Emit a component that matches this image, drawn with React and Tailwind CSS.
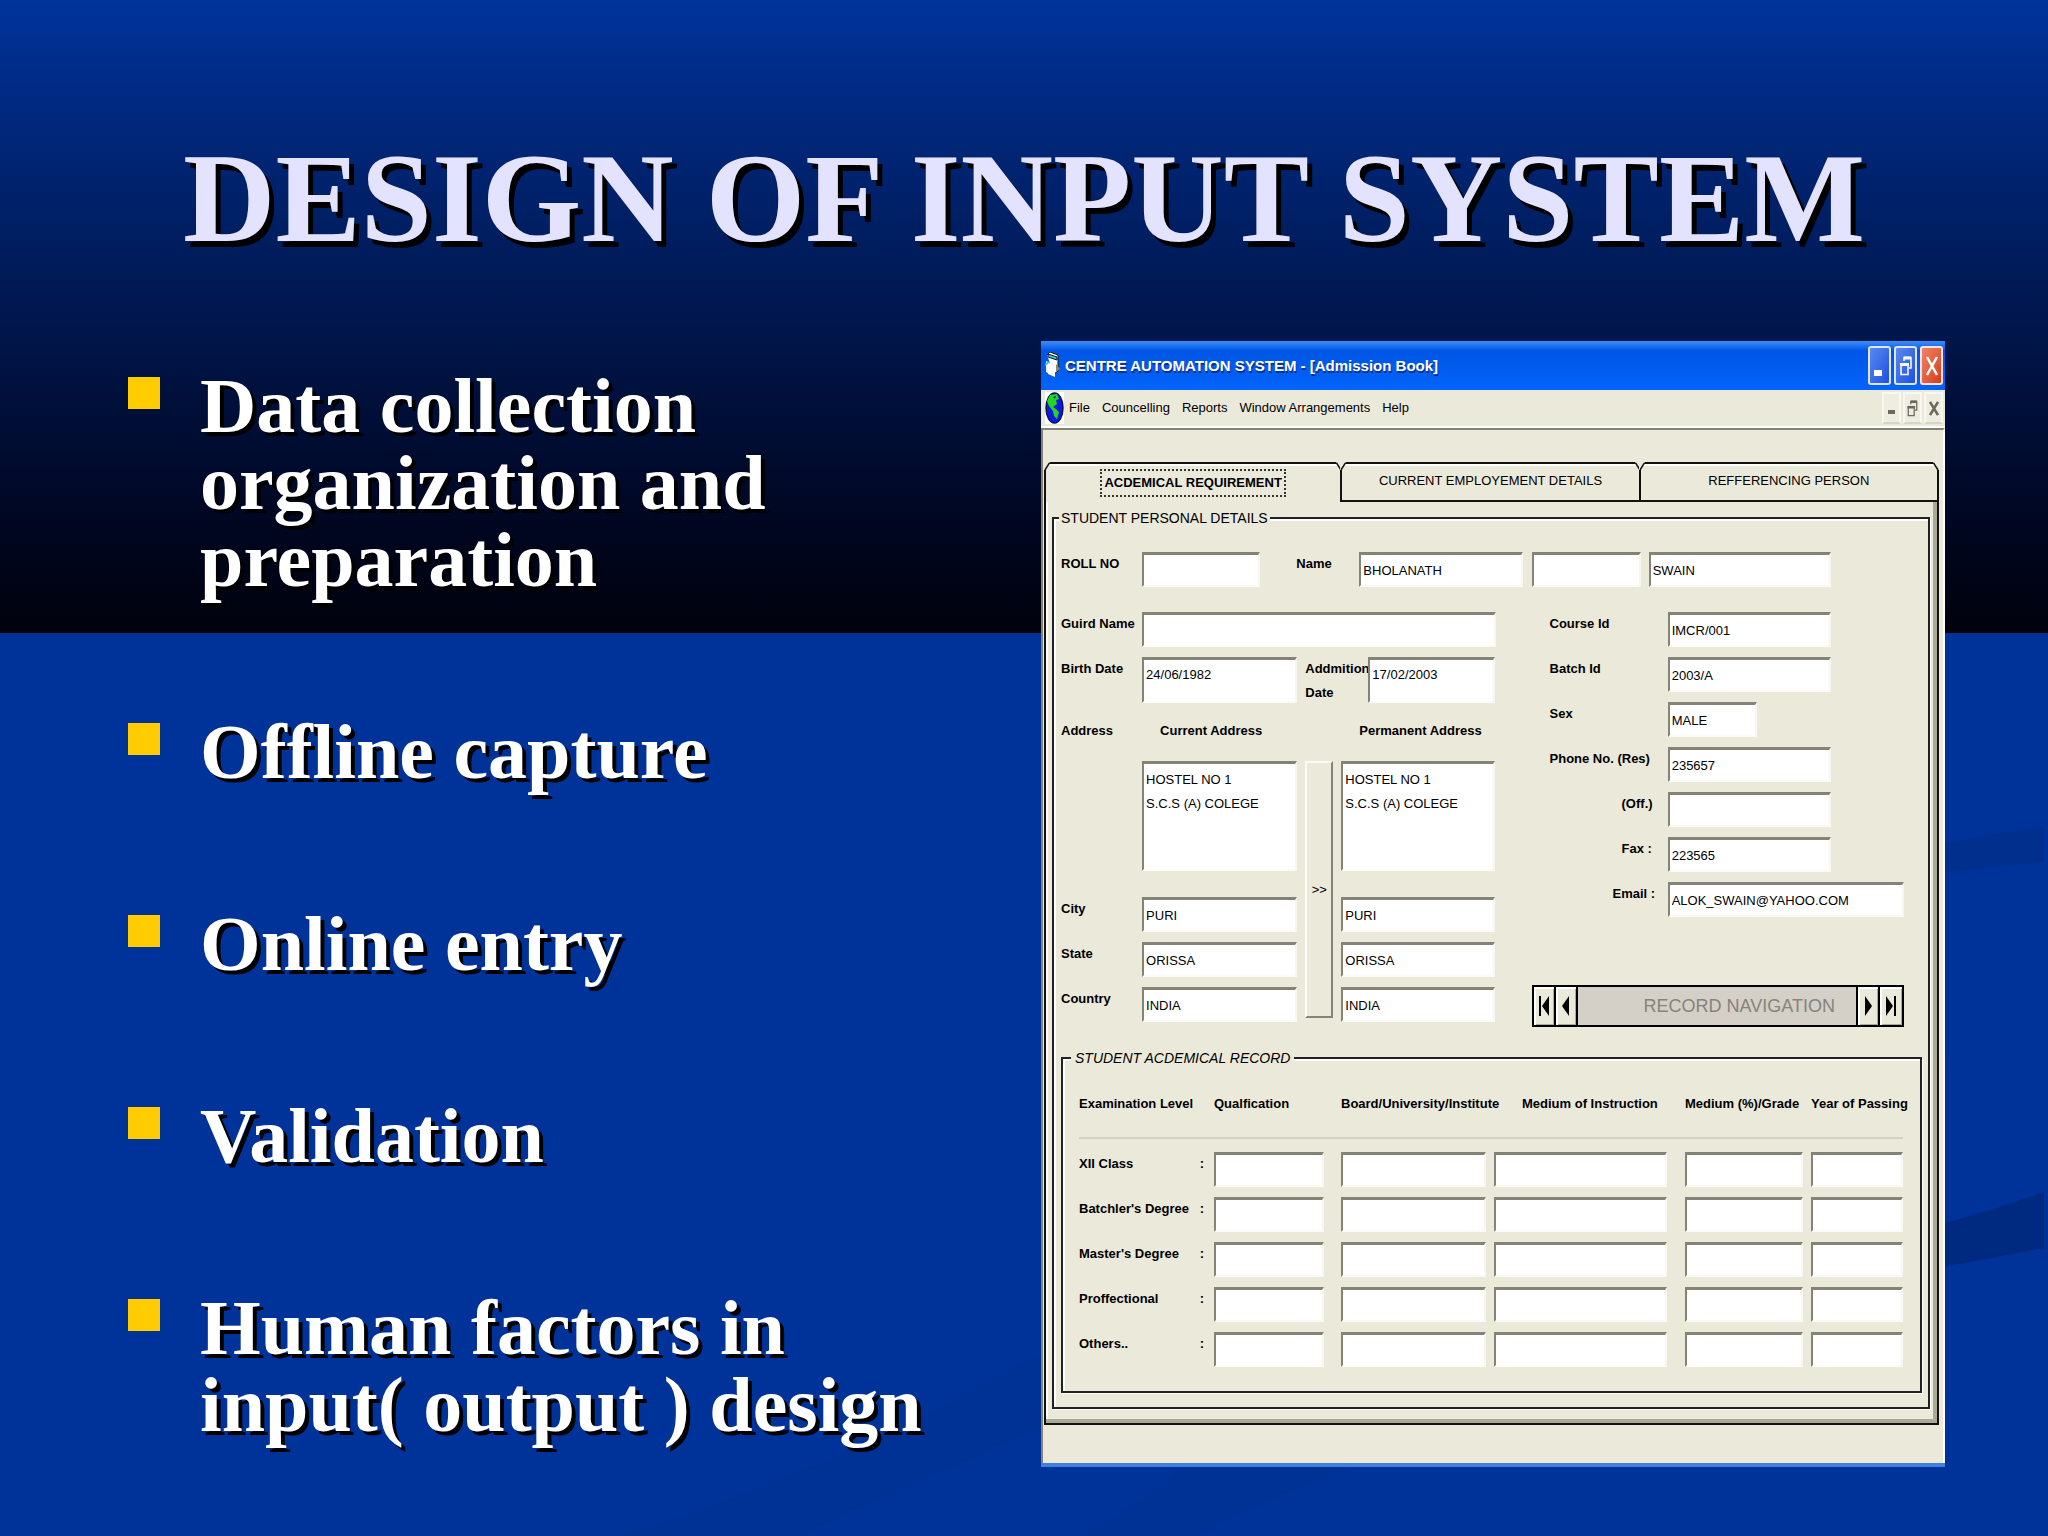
import React from 'react';

const bullets = [
  'Data collection organization and preparation',
  'Offline capture',
  'Online entry',
  'Validation',
  'Human factors in input( output ) design',
];

const menus = ['File', 'Councelling', 'Reports', 'Window Arrangements', 'Help'];
const tabs = ['ACDEMICAL REQUIREMENT', 'CURRENT EMPLOYEMENT DETAILS', 'REFFERENCING PERSON'];

const contact = [
  { id: 'course', label: 'Course Id', value: 'IMCR/001', width: 'w-[69%]' },
  { id: 'batch', label: 'Batch Id', value: '2003/A', width: 'w-[69%]' },
  { id: 'sex', label: 'Sex', value: 'MALE', width: 'w-[38%]' },
  { id: 'phone', label: 'Phone No. (Res)', value: '235657', width: 'w-[69%]' },
  { id: 'office', label: '(Off.)', value: '', width: 'w-[69%]', indent: 'pl-[72px]' },
  { id: 'fax', label: 'Fax :', value: '223565', width: 'w-[69%]', indent: 'pl-[72px]' },
  { id: 'email', label: 'Email :', value: 'ALOK_SWAIN@YAHOO.COM', width: 'w-full', indent: 'pl-[63px]' },
];

const places = [
  { id: 'city', label: 'City', value: 'PURI' },
  { id: 'state', label: 'State', value: 'ORISSA' },
  { id: 'country', label: 'Country', value: 'INDIA' },
];

const exams = ['XII Class', "Batchler's Degree", "Master's Degree", 'Proffectional', 'Others..'];
const examCols = [
  { name: 'Qualfication', pad: '', cell: 'pr-[17px]' },
  { name: 'Board/University/Institute', pad: '', cell: 'pr-2' },
  { name: 'Medium of Instruction', pad: 'pl-7', cell: 'pr-[18px]' },
  { name: 'Medium (%)/Grade', pad: '', cell: 'pr-2' },
  { name: 'Year of Passing', pad: '', cell: '' },
];

const sunken =
  'block min-w-0 bg-white border-t-[3px] border-l-2 border-r-2 border-b-2 border-t-[#858376] border-l-[#858376] border-r-[#f8f7ef] border-b-[#fbfaf4] text-black outline-none';

// ==============================================
// SMALL PARTS
// ==============================================
const Field = ({ className = 'w-full', tall = false, ...rest }) => (
  <input type="text" className={`${sunken} ${tall ? 'h-[46px] pb-3' : 'h-[35px]'} px-[2px] ${className}`} {...rest} />
);

const Label = ({ className = '', children, ...rest }) => (
  <label className={`min-w-0 whitespace-nowrap font-bold leading-6 ${className}`} {...rest}>
    {children}
  </label>
);

const NavButton = ({ label, children }) => (
  <button aria-label={label} className="flex w-[22px] shrink-0 items-center justify-center bg-[#ebe9da] shadow-[inset_2px_2px_0_#fff,inset_-1px_-1px_0_#aaa897]">
    <svg width="12" height="22" viewBox="0 0 12 22" fill="#000">{children}</svg>
  </button>
);

// Cuts the square corner of a tab into a slanted one
const TabCorner = ({ right }) => (
  <svg
    className={`absolute -top-[2px] h-2 w-[6px] ${right ? '-right-[2px] -scale-x-100' : '-left-[2px]'}`}
    viewBox="0 0 6 8"
  >
    <path d="M0 0H6L1 8H0Z" fill="#ebe9da" />
    <path d="M1 8L5.500 1" stroke="#111" strokeWidth="1.500" fill="none" />
  </svg>
);

const RestoreIcon = ({ className }) => (
  <svg className={className} viewBox="0 0 12 20" fill="none" stroke="currentColor">
    <path d="M4 5V1.500H11V12H9" strokeWidth="1.500" />
    <path d="M4 2H11" strokeWidth="3" />
    <path d="M1 8V18.500H8V8" strokeWidth="1.500" />
    <path d="M0 8.500H9" strokeWidth="3" />
  </svg>
);

// ==============================================
// WINDOW CHROME
// ==============================================
const TitleBar = () => (
  <div className="flex h-[49px] items-center bg-linear-to-b from-[#3a8dfa] from-0% via-[#0055e5] via-20% to-[#0364fb] pl-1 pr-[2px]">
    <svg className="h-7 w-[16px]" viewBox="0 0 16 28">
      <path d="M2 3L5 0L13 3V19L9 22" fill="#fff" stroke="#111" />
      <path d="M3 2L12 5V8L3 5Z" fill="#2ccbd6" stroke="#111" />
      <path d="M11 12L15 17L11 20Z" fill="#8a8a62" />
      <path d="M1 9L8 12V24L1 20Z" fill="#f4f4ff" />
      <path d="M3 11L10 14V25L3 22Z" fill="#fff" />
      <path d="M0 13L4 10" stroke="#2ccbd6" strokeWidth="2" />
    </svg>
    <h2 className="ml-1 text-[15px] leading-7 font-bold whitespace-nowrap text-white [text-shadow:1px_2px_0_#0a2f92]">
      CENTRE AUTOMATION SYSTEM - [Admission Book]
    </h2>
    <div className="ml-auto flex gap-[3px] text-white">
      <button aria-label="Minimize" className="flex h-[39px] w-[23px] items-end rounded-[3px] border-2 border-[#dce6ff] bg-linear-to-br from-[#5b87f2] to-[#1f4fe0] pb-[7px] pl-1">
        <span className="h-[6px] w-2 bg-white" />
      </button>
      <button aria-label="Restore" className="flex h-[39px] w-[23px] items-center justify-center rounded-[3px] border-2 border-[#dce6ff] bg-linear-to-br from-[#5b87f2] to-[#1f4fe0]">
        <RestoreIcon className="h-5 w-3" />
      </button>
      <button aria-label="Close" className="flex h-[39px] w-[23px] items-center justify-center rounded-[3px] border-2 border-[#fbe3dc] bg-linear-to-br from-[#ee8366] to-[#d63a10]">
        <svg className="h-5 w-3" viewBox="0 0 12 20" stroke="#fff" strokeWidth="2.500"><path d="M1 1L11 19M11 1L1 19" /></svg>
      </button>
    </div>
  </div>
);

const MenuBar = () => (
  <nav className="flex h-[38px] items-center border-b-2 border-white pl-1 pr-[2px]">
    <svg className="h-8 w-[19px] shrink-0" viewBox="0 0 19 32">
      <rect width="19" height="32" fill="#fff" />
      <ellipse cx="9.500" cy="16" rx="8.500" ry="15" fill="#1018e0" stroke="#06135a" strokeWidth="1.500" />
      <path d="M5 3L12 2L14 7L11 8L12 12L8 15L11 17L14 20L12 27L9 24L8 19L4 14L2 9Z" fill="#22d81f" />
      <path d="M8 5L11 4L10 7Z" fill="#0b2c6c" />
    </svg>
    <div className="ml-[5px] flex gap-3">
      {menus.map((m) => (
        <button key={m} className="leading-6">{m}</button>
      ))}
    </div>
    <div className="ml-auto flex gap-[2px] text-[#6b695d]">
      <button aria-label="Minimize form" className="flex h-8 w-[19px] items-end border-2 border-[#f8f7f0] border-b-[#d8d5c4] bg-[#efede0] pb-2 pl-1">
        <span className="h-1 w-[7px] bg-[#6b695d]" />
      </button>
      <button aria-label="Restore form" className="flex h-8 w-[19px] items-center justify-center border-2 border-[#f8f7f0] border-b-[#d8d5c4] bg-[#efede0]">
        <RestoreIcon className="h-[17px] w-[11px]" />
      </button>
      <button aria-label="Close form" className="flex h-8 w-[19px] items-center justify-center border-2 border-[#f8f7f0] border-b-[#d8d5c4] bg-[#efede0]">
        <svg className="h-[15px] w-[10px]" viewBox="0 0 10 15" stroke="#6b695d" strokeWidth="2.500"><path d="M1 1L9 14M9 1L1 14" /></svg>
      </button>
    </div>
  </nav>
);

const Tabs = () => (
  <div role="tablist" className="grid grid-cols-3">
    {tabs.map((t, i) => (
      <button
        key={t}
        role="tab"
        aria-selected={i === 0}
        className={`relative flex h-10 justify-center border-t-2 border-[#111] pt-[5px] shadow-[inset_0_2px_0_#fff] ${
          i === 0 ? 'border-l-2 border-r-2 font-bold' : 'border-r-2 border-b-2'
        }`}
      >
        <TabCorner />
        <TabCorner right />
        <span className={`h-7 whitespace-nowrap px-[2px] leading-6 ${i === 0 ? 'border-2 border-dotted border-[#333]' : ''}`}>{t}</span>
      </button>
    ))}
  </div>
);

// ==============================================
// FORM SECTIONS
// ==============================================
const NameRow = () => (
  <div className="grid grid-cols-[81fr_118fr_36fr_63fr_163fr_9fr_109fr_8fr_182fr_91fr]">
    <Label htmlFor="roll">ROLL NO</Label>
    <Field id="roll" />
    <span />
    <Label htmlFor="first">Name</Label>
    <Field id="first" defaultValue="BHOLANATH" />
    <span />
    <Field aria-label="Middle name" />
    <span />
    <Field aria-label="Last name" defaultValue="SWAIN" />
  </div>
);

const AddressBlock = () => (
  <div className="grid grid-cols-[81fr_155fr_8fr_28fr_8fr_154fr] gap-y-[10px]">
    <span className="pb-2 font-bold leading-6">Address</span>
    <Label htmlFor="current" className="pl-[18px]">Current Address</Label>
    <Label htmlFor="permanent" className="col-start-6 pl-[18px]">Permanent Address</Label>

    <textarea id="current" defaultValue={'HOSTEL NO 1\nS.C.S (A) COLEGE'} className={`${sunken} col-start-2 mb-4 h-[110px] resize-none overflow-hidden px-[2px] py-1 leading-6`} />
    <button className="col-start-4 row-span-4 mb-1 border-2 border-t-[#fbfaf4] border-l-[#fbfaf4] border-r-[#858376] border-b-[#858376]">&gt;&gt;</button>
    <textarea id="permanent" defaultValue={'HOSTEL NO 1\nS.C.S (A) COLEGE'} className={`${sunken} col-start-6 mb-4 h-[110px] resize-none overflow-hidden px-[2px] py-1 leading-6`} />

    {places.map((p) => (
      <React.Fragment key={p.id}>
        <Label htmlFor={p.id} className="col-start-1">{p.label}</Label>
        <Field id={p.id} defaultValue={p.value} />
        <Field aria-label={`Permanent ${p.label}`} defaultValue={p.value} className="col-start-6 w-full" />
      </React.Fragment>
    ))}
  </div>
);

const PersonalBlock = () => (
  <div className="pb-[5px]">
    <div className="grid grid-cols-[81fr_353fr]">
      <Label htmlFor="guardian">Guird Name</Label>
      <Field id="guardian" />
    </div>
    <div className="mt-[10px] mb-[14px] grid grid-cols-[81fr_155fr_8fr_63fr_127fr]">
      <Label htmlFor="birth">Birth Date</Label>
      <Field id="birth" tall defaultValue="24/06/1982" />
      <span />
      <Label htmlFor="admission">Addmition<br />Date</Label>
      <Field id="admission" tall defaultValue="17/02/2003" />
    </div>
    <AddressBlock />
  </div>
);

const ContactBlock = () => (
  <div className="col-start-3 flex flex-col justify-between">
    <div className="flex flex-col gap-[10px] pl-[18px]">
      {contact.map((c) => (
        <div key={c.id} className="grid grid-cols-[118fr_236fr]">
          <Label htmlFor={c.id} className={c.indent}>{c.label}</Label>
          <Field id={c.id} defaultValue={c.value} className={c.width} />
        </div>
      ))}
    </div>
    <div className="flex h-[42px] divide-x-2 divide-black border-2 border-black">
      <NavButton label="First record"><path d="M1 1H3V21H1ZM11 1V21L4 11Z" /></NavButton>
      <NavButton label="Previous record"><path d="M9 1V21L2 11Z" /></NavButton>
      <span className="flex-1 bg-[#d4d0c8] pl-[66px] text-[18px] leading-[38px] whitespace-nowrap text-[#85837b]">RECORD NAVIGATION</span>
      <NavButton label="Next record"><path d="M3 1V21L10 11Z" /></NavButton>
      <NavButton label="Last record"><path d="M9 1H11V21H9ZM1 1V21L8 11Z" /></NavButton>
    </div>
  </div>
);

const RecordTable = () => (
  <fieldset className="mt-[19px] min-w-0 border-2 border-[#222] pl-4 pr-[17px] pb-[14px] shadow-[inset_2px_2px_0_#fff,1px_1px_0_#fff]">
    <legend className="ml-[-8px] bg-[#ebe9da] px-1 text-[14px] leading-6 italic">STUDENT ACDEMICAL RECORD</legend>
    <table className="mt-[22px] w-full table-fixed border-collapse text-left">
      <colgroup>
        <col className="w-[135px]" />
        <col className="w-[127px]" />
        <col className="w-[153px]" />
        <col className="w-[191px]" />
        <col className="w-[126px]" />
        <col className="w-[92px]" />
      </colgroup>
      <thead>
        <tr className="h-[46px] border-b-2 border-[#d3d1c1] align-top leading-6 whitespace-nowrap">
          <th>Examination Level</th>
          {examCols.map((c) => (
            <th key={c.name} className={c.pad}>{c.name}</th>
          ))}
        </tr>
      </thead>
      <tbody className="before:block before:h-[13px]">
        {exams.map((exam) => (
          <tr key={exam} className="align-top">
            <th className="pr-[10px]">
              <span className="flex justify-between leading-6 whitespace-nowrap">{exam}<span>:</span></span>
            </th>
            {examCols.map((c) => (
              <td key={c.name} className={`pb-[10px] ${c.cell}`}>
                <Field aria-label={`${exam} ${c.name}`} />
              </td>
            ))}
          </tr>
        ))}
      </tbody>
    </table>
  </fieldset>
);

const AdmissionWindow = () => (
  <section className="min-w-0 self-start border-b-4 border-[#3f7fe0] bg-[#ebe9da] font-['Liberation_Sans',sans-serif] text-[13px] text-black">
    <TitleBar />
    <MenuBar />
    <div className="border-t-2 border-l-2 border-r-2 border-t-[#858376] border-l-[#858376] border-r-white pt-8 pr-1 pb-[38px] pl-[1px]">
      <Tabs />
      <form className="border-r-2 border-b-2 border-l-2 border-[#111] pt-1 pr-[7px] pb-[14px] pl-[6px] shadow-[inset_-4px_-4px_0_#aaa897,inset_2px_0_0_#fff]">
        <fieldset className="min-w-0 border-2 border-[#222] pr-[6px] pb-[14px] pl-[7px] shadow-[inset_2px_2px_0_#fff,1px_1px_0_#fff]">
          <legend className="ml-[-2px] bg-[#ebe9da] px-[2px] text-[14px] leading-6">STUDENT PERSONAL DETAILS</legend>
          <div className="pt-[22px]">
            <NameRow />
            <div className="mt-[25px] grid grid-cols-[434fr_36fr_372fr_18fr]">
              <PersonalBlock />
              <ContactBlock />
            </div>
            <RecordTable />
          </div>
        </fieldset>
      </form>
    </div>
  </section>
);

// ==============================================
// SLIDE
// ==============================================
export default function App() {
  return (
    <main className="relative isolate min-h-screen overflow-hidden bg-[#003399] font-['Liberation_Serif',serif]">
      <div className="absolute inset-x-0 top-0 -z-10 h-[633px] bg-linear-to-b from-[#00339b] to-[#00020c]" />
      <svg className="absolute inset-0 -z-10 h-full w-full" viewBox="0 0 2048 1536" preserveAspectRatio="none">
        <path d="M1900 852L1945 843L2044 825V862L1900 877Z" fill="#002f8e" />
        <path d="M1900 1235L1945 1223Q2000 1208 2044 1192V1248L1900 1275Z" fill="#002a80" />
        <path d="M620 1536Q860 1460 1060 1340V1420Q900 1490 800 1536Z" fill="#003195" />
        <path d="M1080 1536Q1150 1500 1200 1450H1400Q1260 1500 1200 1536Z" fill="#003195" />
      </svg>

      <h1 className="pt-[126px] text-center text-[128px] leading-[144px] font-bold whitespace-nowrap text-[#e3e3ff] [text-shadow:5px_6px_0_#000]">
        DESIGN OF INPUT SYSTEM
      </h1>

      <div className="mt-[71px] grid grid-cols-[913fr_904fr] pr-[103px] pl-32">
        <ul className="flex flex-col gap-[115px] pt-[26px] text-[78px] leading-[77px] font-bold text-white [text-shadow:4px_4px_0_#000]">
          {bullets.map((b) => (
            <li key={b} className="flex">
              <span className="mt-[10px] mr-[40px] size-8 shrink-0 bg-[#ffcc00]" />
              <span className="max-w-[760px]">{b}</span>
            </li>
          ))}
        </ul>
        <AdmissionWindow />
      </div>
    </main>
  );
}
